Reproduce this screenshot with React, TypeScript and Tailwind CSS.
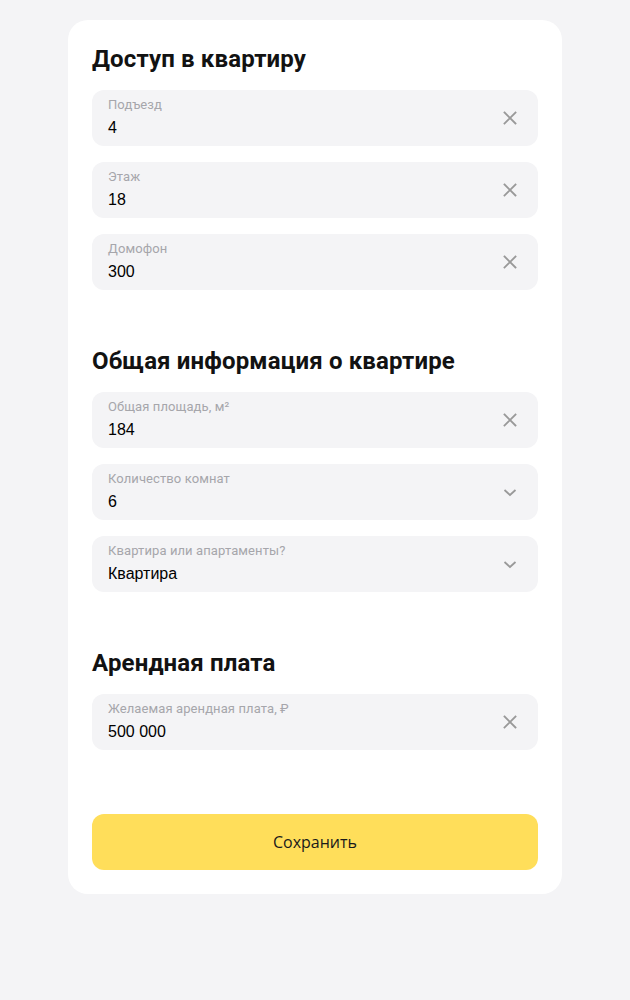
import React from 'react';

type Field = { label: string; value: string; kind: 'clear' | 'select' };

const sections: { title: string; fields: Field[] }[] = [
  {
    title: 'Доступ в квартиру',
    fields: [
      { label: 'Подъезд', value: '4', kind: 'clear' },
      { label: 'Этаж', value: '18', kind: 'clear' },
      { label: 'Домофон', value: '300', kind: 'clear' },
    ],
  },
  {
    title: 'Общая информация о квартире',
    fields: [
      { label: 'Общая площадь, м²', value: '184', kind: 'clear' },
      { label: 'Количество комнат', value: '6', kind: 'select' },
      { label: 'Квартира или апартаменты?', value: 'Квартира', kind: 'select' },
    ],
  },
  {
    title: 'Арендная плата',
    fields: [{ label: 'Желаемая арендная плата, ₽', value: '500 000', kind: 'clear' }],
  },
];

const ClearIcon = () => (
  <svg width="14" height="14" viewBox="0 0 14 14" fill="none">
    <path d="M1.5 1.5l11 11M12.5 1.5l-11 11" stroke="#999" strokeWidth="1.8" strokeLinecap="square" />
  </svg>
);

const ChevronIcon = () => (
  <svg width="14" height="9" viewBox="0 0 14 9" fill="none">
    <path d="M1.5 2l5.5 5 5.5-5" stroke="#999" strokeWidth="1.8" />
  </svg>
);

const InputField: React.FC<{ field: Field }> = ({ field }) => (
  <div className="flex h-14 items-center rounded-xl bg-[#f4f4f6] pl-4 pr-5">
    <div className="flex flex-1 flex-col pb-px">
      <span className="text-[13px] leading-4 tracking-[0.1px] text-[#a6a6ab] font-['Roboto',sans-serif]">{field.label}</span>
      <span className="mt-[5px] text-[16px] leading-5 text-black font-['Liberation_Sans',Arial,sans-serif]">
        {field.value}
      </span>
    </div>
    <div className="flex w-[16px] items-center justify-center">
      {field.kind === 'clear' ? <ClearIcon /> : <ChevronIcon />}
    </div>
  </div>
);

export default function App() {
  return (
    <div className="min-h-[1000px] bg-[#f4f4f6] pt-5">
      <div className="mx-auto w-[494px] rounded-[20px] bg-white p-6">
        {sections.map((section, i) => (
          <section key={section.title} className={i > 0 ? 'mt-14' : ''}>
            <h2 className="mb-4 text-[24px] leading-[30px] font-bold tracking-[0.15px] text-[#121212] font-['Roboto',sans-serif]">
              {section.title}
            </h2>
            <div className="flex flex-col gap-4">
              {section.fields.map(f => (
                <InputField key={f.label} field={f} />
              ))}
            </div>
          </section>
        ))}
        <button className="mt-16 h-14 w-full rounded-xl bg-[#ffde5a] text-[16px] text-[#1a1a1a] font-['Open_Sans',sans-serif]">
          Сохранить
        </button>
      </div>
    </div>
  );
}
